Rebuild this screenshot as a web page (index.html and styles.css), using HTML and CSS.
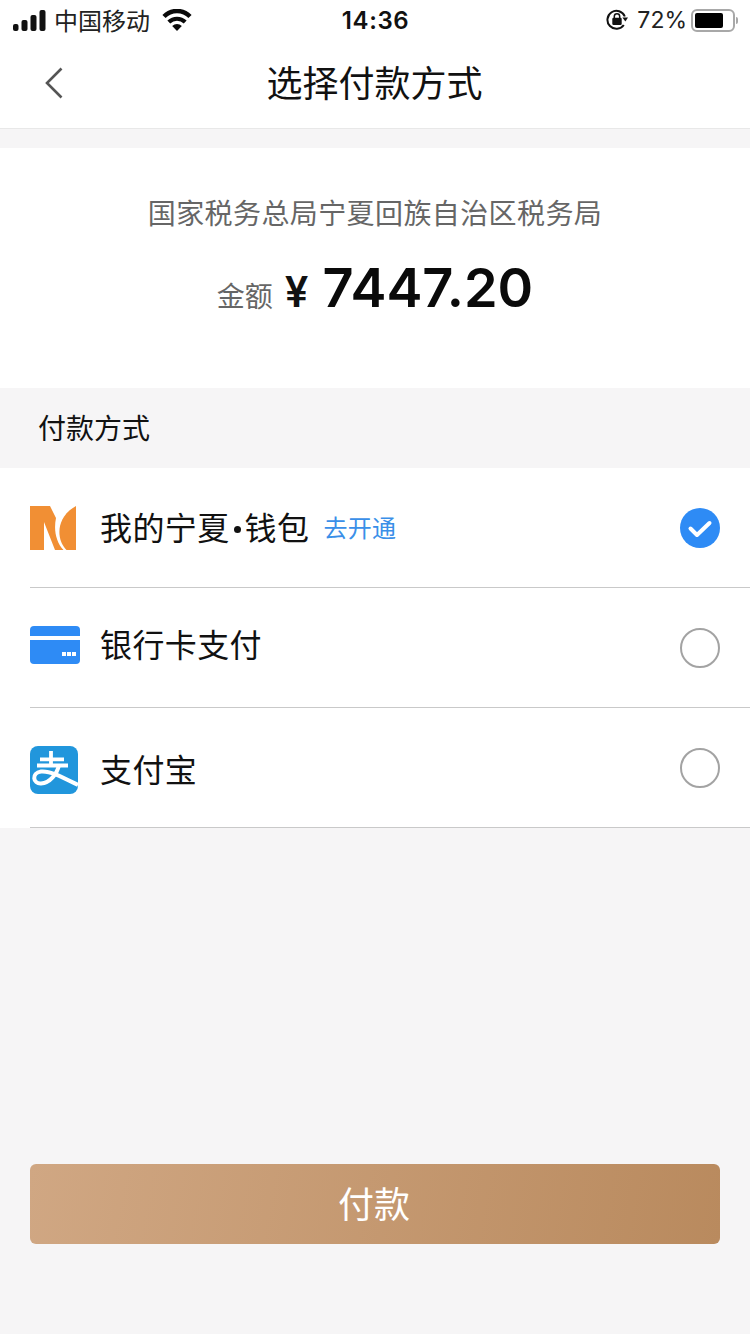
FILE: index.html
```html
<!DOCTYPE html>
<html lang="zh-CN">
<head>
  <meta charset="UTF-8">
  <meta name="viewport" content="width=device-width, initial-scale=1.0">
  <title>选择付款方式</title>
  <link rel="stylesheet" href="styles.css">
</head>
<body>
  <div class="page">
    <!-- 状态栏 -->
    <div class="status-bar">
      <div class="status-left">
        <svg class="signal" width="34" height="21" viewBox="0 0 34 21">
          <rect x="0" y="14" width="5.500" height="7" rx="2" fill="#111"/>
          <rect x="8.500" y="10" width="6" height="11" rx="2" fill="#111"/>
          <rect x="17.500" y="5" width="6" height="16" rx="2" fill="#111"/>
          <rect x="26.500" y="0" width="6" height="21" rx="2" fill="#111"/>
        </svg>
        <span class="carrier">中国移动</span>
        <svg class="wifi" width="30" height="22" viewBox="0 0 30 22">
          <path d="M2 7.500 A18 18 0 0 1 28 7.500" fill="none" stroke="#0a0a0a" stroke-width="4.400"/>
          <path d="M6.800 13 A12 12 0 0 1 23.200 13" fill="none" stroke="#0a0a0a" stroke-width="4.200"/>
          <path d="M10.200 17 A7 7 0 0 1 19.800 17 L15 22 Z" fill="#0a0a0a"/>
        </svg>
      </div>
      <div class="status-time">14:36</div>
      <div class="status-right">
        <svg class="lock" width="22" height="22" viewBox="0 0 22 22">
          <path d="M17.800 16 A9 9 0 1 1 18.800 7.500" fill="none" stroke="#111" stroke-width="2"/>
          <path d="M16.400 8.500 L22 8.500 L19.400 12.500 Z" fill="#111"/>
          <rect x="6.300" y="8.800" width="9.400" height="7.200" rx="1.200" fill="#111"/>
          <path d="M8.300 9 V7.500 A2.700 2.700 0 0 1 13.700 7.500 V9" fill="none" stroke="#111" stroke-width="1.500"/>
        </svg>
        <span class="battery-text">72%</span>
        <div class="battery">
          <div class="battery-body"><div class="battery-level"></div></div>
          <div class="battery-cap"></div>
        </div>
      </div>
    </div>

    <!-- 导航 -->
    <div class="nav">
      <svg class="nav-back" width="20" height="32" viewBox="0 0 20 32">
        <path d="M17.500 1.500 L3 16 L17.500 30.500" fill="none" stroke="#555" stroke-width="2.600"/>
      </svg>
      <h1 class="nav-title">选择付款方式</h1>
    </div>

    <!-- 金额 -->
    <div class="summary">
      <p class="summary-org">国家税务总局宁夏回族自治区税务局</p>
      <div class="summary-amount">
        <span class="amount-label">金额</span>
        <span class="amount-sign">¥</span>
        <span class="amount-value">7447.20</span>
      </div>
    </div>

    <div class="section-title">付款方式</div>

    <div class="pay-list">
      <div class="pay-row">
        <svg class="pay-icon" width="46" height="44" viewBox="0 0 46 44" preserveAspectRatio="xMinYMid">
          <path d="M0 0 H20 L26 12 C23.500 24 26 36 33.500 44 H25 L14 16 V44 H0 Z" fill="#f18f34"/>
          <path d="M46 0 V44 H36.500 C26 34 25.500 11 46 0 Z" fill="#f18f34"/>
        </svg>
        <span class="pay-name">我的宁夏<span class="dot"></span>钱包</span>
        <span class="pay-link">去开通</span>
        <svg class="radio" width="40" height="40" viewBox="0 0 40 40">
          <circle cx="20" cy="20" r="20" fill="#2e8bf5"/>
          <path d="M10.500 20.500 L17 27 L29.500 15" fill="none" stroke="#fff" stroke-width="4" stroke-linecap="round" stroke-linejoin="round"/>
        </svg>
      </div>
      <div class="pay-row pay-row-up">
        <svg class="pay-icon" width="50" height="38" viewBox="0 0 50 38">
          <path d="M0 10 V4 A4 4 0 0 1 4 0 H46 A4 4 0 0 1 50 4 V10 Z" fill="#2e8bf5"/>
          <path d="M0 14 H50 V34 A4 4 0 0 1 46 38 H4 A4 4 0 0 1 0 34 Z" fill="#2e8bf5"/>
          <rect x="32" y="26" width="4" height="4" fill="#fff"/>
          <rect x="37" y="26" width="4" height="4" fill="#fff"/>
          <rect x="42" y="26" width="4" height="4" fill="#fff"/>
        </svg>
        <span class="pay-name">银行卡支付</span>
        <span class="radio radio-empty"></span>
      </div>
      <div class="pay-row pay-row-down">
        <svg class="pay-icon" width="48" height="48" viewBox="0 0 48 48" preserveAspectRatio="xMinYMid">
          <rect width="48" height="48" rx="8" fill="#2196dc"/>
          <path d="M10 13.300 H34 M7 19.500 H38 M21 5 V19" fill="none" stroke="#fff" stroke-width="3.800"/>
          <path d="M29 19 C27 28 20 37 11 37.500 C3 38 1 27 11 25.500 C20 24.500 32 31 48 39" fill="none" stroke="#fff" stroke-width="4"/>
        </svg>
        <span class="pay-name">支付宝</span>
        <span class="radio radio-empty"></span>
      </div>
    </div>

    <div class="footer">
      <button class="pay-btn">付款</button>
    </div>
  </div>
</body>
</html>
```

FILE: styles.css
```css
/* Reset y base */
* { box-sizing: border-box; margin: 0; padding: 0; }
body { font-family: Inter, "Noto Sans CJK SC", sans-serif; background: #f6f5f6; color: #111; }
.page { width: 750px; height: 1334px; display: flex; flex-direction: column; overflow: hidden; }

/* Status bar */
.status-bar { height: 40px; background: #fff; display: grid; grid-template-columns: 1fr auto 1fr; align-items: center; padding: 0 12px 0 13px; }
.status-left { display: flex; align-items: center; }
.carrier { font-size: 24px; margin-left: 7px; color: #222; padding-bottom: 2px; }
.wifi { margin-left: 12px; }
.status-time { font-size: 24px; font-weight: 600; letter-spacing: 0.6px; }
.status-right { display: flex; align-items: center; justify-content: flex-end; }
.battery-text { font-size: 23px; margin-left: 9px; color: #222; }
.battery { display: flex; align-items: center; margin-left: 4px; }
.battery-body { width: 44px; height: 23px; border: 2px solid #a8a8a8; border-radius: 6px; padding: 2px; }
.battery-level { width: 28px; height: 15px; background: #000; border-radius: 2px; }
.battery-cap { width: 2px; height: 7px; background: #a8a8a8; margin-left: 1px; border-radius: 0 2px 2px 0; }

/* Nav */
.nav { height: 89px; background: #fff; border-bottom: 1px solid #e8e8e8; display: flex; align-items: center; justify-content: center; position: relative; }
.nav-back { position: absolute; left: 44px; top: 27px; }
.nav-title { font-size: 36px; font-weight: 400; color: #111; padding: 0 1px 6px 0; }

/* Summary */
.summary { height: 240px; margin-top: 19px; background: #fff; display: flex; flex-direction: column; align-items: center; padding-top: 48px; }
.summary-org { font-size: 28px; line-height: 36px; color: #666; letter-spacing: 0.4px; }
.summary-amount { display: flex; align-items: baseline; margin-top: 20px; }
.amount-label { font-size: 28px; color: #666; }
.amount-sign { font-size: 42px; font-weight: 600; margin-left: 12px; }
.amount-value { font-size: 54px; font-weight: 600; margin-left: 14px; line-height: 72px; color: #0a0a0a; }

.section-title { height: 80px; padding: 0 0 3px 38px; display: flex; align-items: center; font-size: 28px; color: #111; }

/* Payment list */
.pay-list { background: #fff; }
.pay-row { height: 120px; margin-left: 30px; padding-right: 30px; border-bottom: 1px solid #c9c9c9; display: flex; align-items: center; }
.pay-icon { flex: none; width: 50px; margin-right: 20px; }
.pay-name { font-size: 32px; color: #111; padding-bottom: 4px; letter-spacing: 0.4px; }
.dot { display: inline-block; width: 7px; height: 7px; margin: 0 4px 3px 4px; border-radius: 50%; background: #111; vertical-align: middle; }
.pay-link { font-size: 24px; color: #3a8fe8; margin-left: 14px; padding-bottom: 3px; letter-spacing: 0.3px; }
.radio { margin-left: auto; width: 40px; height: 40px; flex: none; }
.radio-empty { border: 2px solid #a3a3a3; border-radius: 50%; }
.pay-row-up .pay-icon, .pay-row-up .pay-name { margin-bottom: 6px; }
.pay-row-down .pay-icon, .pay-row-down .pay-name { margin-top: 4px; }

/* Footer */
.footer { padding: 336px 30px 0; }
.pay-btn { width: 100%; height: 80px; border: none; border-radius: 6px; padding: 0 2px 4px 0; background: linear-gradient(100deg, #d0a783, #b98a5e); color: #fff; font-family: inherit; font-size: 36px; }
```
